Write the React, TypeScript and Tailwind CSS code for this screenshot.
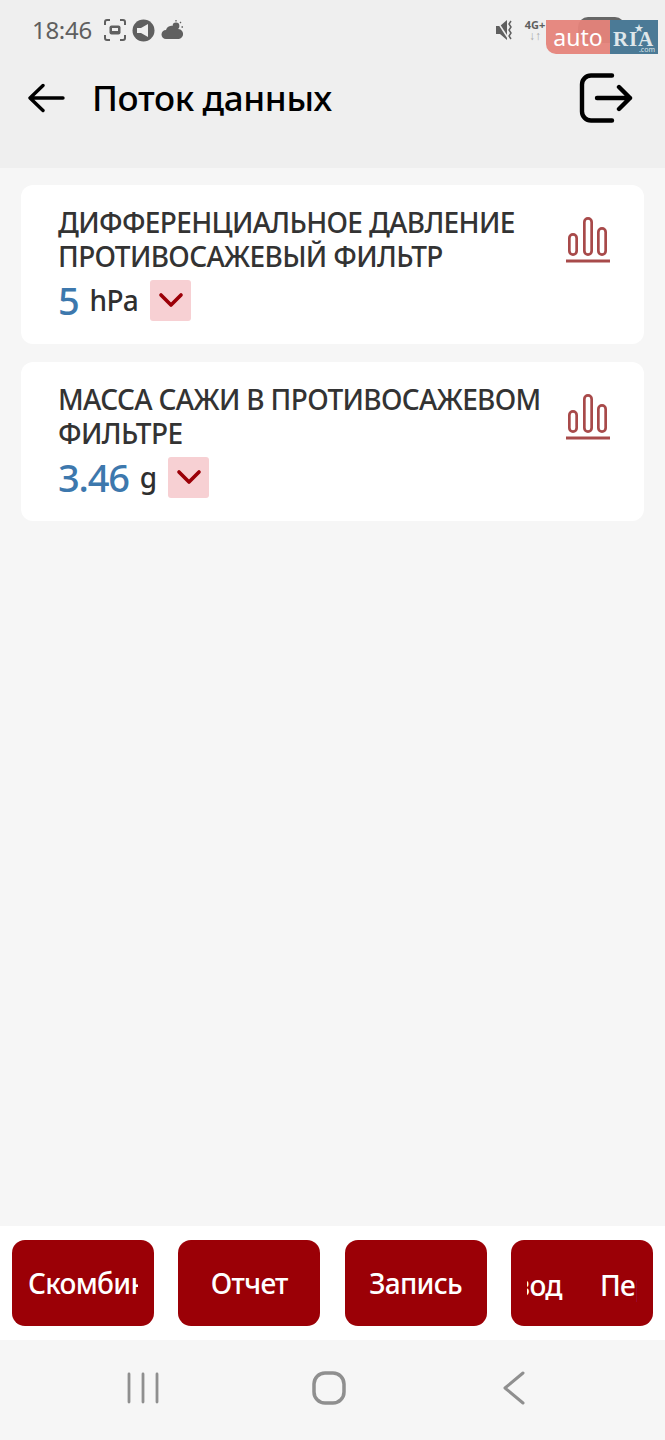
import { ChevronDown } from 'lucide-react';

const font = { fontFamily: '"Noto Sans", sans-serif' };

function BarsIcon() {
  return (
    <svg width="46" height="50" viewBox="0 0 46 50" fill="none" stroke="#a84a4a" strokeWidth="2.7">
      <rect x="4.35" y="19.35" width="7.3" height="20.3" rx="3.65" />
      <rect x="19.35" y="3.35" width="7.3" height="36.3" rx="3.65" />
      <rect x="33.35" y="13.35" width="7.3" height="26.3" rx="3.65" />
      <path d="M1 46H45" strokeWidth="2.8" />
    </svg>
  );
}

function Card({ lines, value, unit }: { lines: string[]; value: string; unit: string }) {
  return (
    <div className="h-[159px] rounded-xl bg-white pl-[37px] pr-[33px] pt-[21px] flex justify-between">
      <div>
        <div className="text-[28px] leading-[33.5px] font-medium text-[#333333] tracking-[-0.65px] whitespace-nowrap">
          {lines.map((l) => (
            <div key={l}>{l}</div>
          ))}
        </div>
        <div className="flex items-center h-[44px] mt-[5px]">
          <span className="text-[38px] leading-none font-medium text-[#3d78ad] tracking-[-1.2px]">{value}</span>
          <span className="ml-[11px] text-[28px] leading-none font-medium text-[#2f2f2f] tracking-[-0.7px]">{unit}</span>
          <span className="ml-[12px] w-[41px] h-[41px] rounded-[3px] bg-[#f7d0d3] flex items-center justify-center">
            <ChevronDown className="w-[40px] h-[40px] text-[#9b0008]" strokeWidth={2.2} />
          </span>
        </div>
      </div>
      <div className="pt-[9px]">
        <BarsIcon />
      </div>
    </div>
  );
}

function ActionButton({ children }: { children: React.ReactNode }) {
  return (
    <div className="w-[142px] h-[86px] rounded-[13px] bg-[#9b0006] text-white text-[28px] font-medium overflow-hidden flex items-center justify-center whitespace-nowrap tracking-[-0.7px]">
      {children}
    </div>
  );
}

export default function App() {
  return (
    <div className="relative w-[665px] h-[1440px] bg-[#f6f6f6] flex flex-col overflow-hidden" style={font}>
      <header className="h-[168px] bg-[#efefef] shrink-0">
        <div className="h-[60px] pl-[32px] pr-[8px] flex items-center text-[#5f5f5f]">
          <span className="text-[24px] tracking-[-0.3px]">18:46</span>
          <svg width="24" height="24" viewBox="0 0 24 24" fill="none" stroke="#5f5f5f" strokeWidth="2" className="ml-[11px]">
            <path d="M2 7V4a2 2 0 0 1 2-2h3M17 2h3a2 2 0 0 1 2 2v3M22 17v3a2 2 0 0 1-2 2h-3M7 22H4a2 2 0 0 1-2-2v-3" />
            <rect x="6.5" y="7.5" width="11" height="9" rx="2" fill="#5f5f5f" stroke="none" />
            <rect x="9" y="10" width="6" height="3" fill="#efefef" stroke="none" />
          </svg>
          <svg width="23" height="23" viewBox="0 0 23 23" className="ml-[5px]">
            <circle cx="11.5" cy="11.5" r="11" fill="#5f5f5f" />
            <path d="M5 9h4l7-4v13l-7-4H5z" fill="#efefef" />
          </svg>
          <svg width="23" height="22" viewBox="0 0 23 22" className="ml-[6px]">
            <path d="M5 20a4 4 0 0 1 0-9 6 6 0 0 1 11-1 5 5 0 0 1 2 10z" fill="#5f5f5f" />
            <circle cx="15" cy="7" r="3.4" fill="#5f5f5f" />
            <path d="M15 1v1.5M20 3l-1 1M22 8h-1.500" stroke="#5f5f5f" strokeWidth="1.300" />
          </svg>
          <div className="ml-auto flex items-center">
            <svg width="20" height="22" viewBox="0 0 20 22" fill="#5f5f5f">
              <path d="M0 7h4l7-6v20l-7-6H0z" />
              <path d="M15 2l-2 3 2 3-2 3 2 3-2 3 2 3" fill="none" stroke="#5f5f5f" strokeWidth="1.500" />
              <path d="M1 2l11 17" stroke="#efefef" strokeWidth="1.500" />
            </svg>
            <div className="w-[24px] ml-[7px] mr-[110px] flex flex-col items-center">
              <span className="text-[11px] leading-[11px] font-bold text-[#5f5f5f]">4G+</span>
              <span className="text-[12px] leading-[12px] font-bold text-[#aaaaaa]">↓↑</span>
            </div>
          </div>
        </div>
        <div className="h-[76px] pl-[28px] pr-[31px] flex items-center">
          <svg width="38" height="32" viewBox="0 0 38 32" fill="none" stroke="#000" strokeWidth="3.4" strokeLinecap="round" strokeLinejoin="round">
            <path d="M35 16H3M15 3.500 2 16l13 12.500" />
          </svg>
          <h1 className="ml-[26px] text-[35px] font-medium text-black tracking-[-0.35px]">Поток данных</h1>
          <svg width="54" height="50" viewBox="0 0 54 50" fill="none" stroke="#000" strokeWidth="4.4" strokeLinecap="round" strokeLinejoin="round" className="ml-auto -translate-x-[1px]">
            <path d="M33 2.500H12a9 9 0 0 0-9 9v27a9 9 0 0 0 9 9h21" />
            <path d="M18 25h33M40 14l11 11-11 11" />
          </svg>
        </div>
      </header>

      <main className="flex-1 px-[21px] pt-[17px] flex flex-col gap-[18px]">
        <Card lines={['ДИФФЕРЕНЦИАЛЬНОЕ ДАВЛЕНИЕ', 'ПРОТИВОСАЖЕВЫЙ ФИЛЬТР']} value="5" unit="hPa" />
        <Card lines={['МАССА САЖИ В ПРОТИВОСАЖЕВОМ', 'ФИЛЬТРЕ']} value="3.46" unit="g" />
      </main>

      <div className="h-[114px] bg-white shrink-0 pl-[12px] flex items-center gap-[24.3px]">
        <ActionButton>
          <span className="block w-[110px] overflow-hidden">Скомбинировать</span>
        </ActionButton>
        <ActionButton>Отчет</ActionButton>
        <ActionButton>Запись</ActionButton>
        <ActionButton>
          <span className="block w-[110px] overflow-hidden relative h-[38px]">
            <span className="absolute right-[75px] top-0">Вывод</span>
            <span className="absolute left-[73px] top-0">Перевод</span>
          </span>
        </ActionButton>
      </div>

      <nav className="h-[100px] shrink-0 flex items-center justify-between pl-[127px] pr-[139px] pb-[4px]">
        <svg width="32" height="32" viewBox="0 0 32 32" stroke="#8f8f8f" strokeWidth="2.800" strokeLinecap="round">
          <path d="M2 2v28M16 2v28M30 2v28" />
        </svg>
        <svg width="34" height="34" viewBox="0 0 34 34" fill="none" stroke="#8f8f8f" strokeWidth="3.500" className="mr-[4px]">
          <rect x="2" y="2" width="30" height="30" rx="11" />
        </svg>
        <svg width="24" height="34" viewBox="0 0 24 34" fill="none" stroke="#8f8f8f" strokeWidth="3" strokeLinecap="round" strokeLinejoin="round">
          <path d="M21 2 3 17l18 15" />
        </svg>
      </nav>

      {/* battery shows through the watermark */}
      <div className="absolute left-[578px] top-[17px] w-[47px] h-[26px] rounded-[10px] bg-[#666666]" />

      {/* watermark */}
      <div className="absolute left-[546px] top-[20px] w-[112px] h-[34px] flex">
        <div className="w-[64px] rounded-bl-[10px] bg-[#e5837a]/95 text-white text-[23px] leading-[34px] text-center">auto</div>
        <div className="relative w-[48px] bg-[#4b7a96] text-[#dfe7ea]">
          <span className="absolute left-[24px] top-[2px] text-[11px] leading-[11px]">★</span>
          <span className="absolute left-[3px] top-[8px] text-[21px] leading-[22px] font-bold tracking-[0.8px]" style={{ fontFamily: '"Liberation Serif", serif' }}>
            RIA
          </span>
          <span className="absolute right-[3px] bottom-[0px] text-[7px] leading-[9px]">.com</span>
        </div>
      </div>
    </div>
  );
}
